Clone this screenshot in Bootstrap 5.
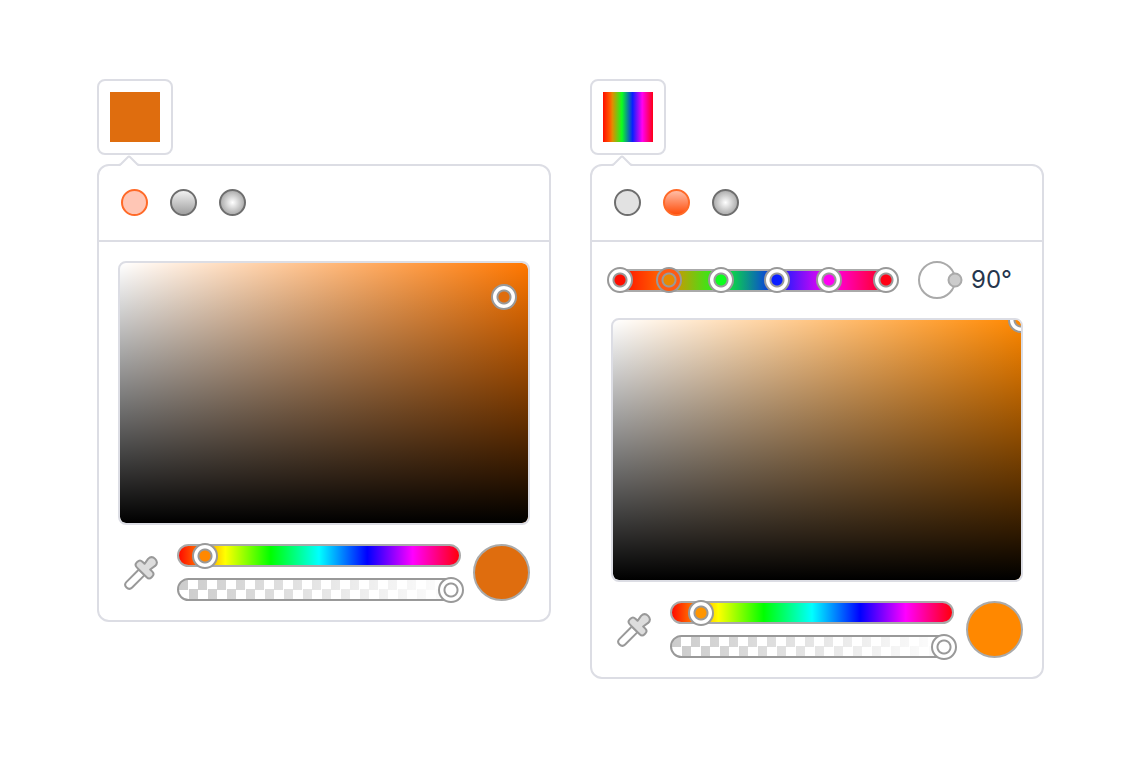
<!DOCTYPE html>
<html lang="en">
<head>
<meta charset="utf-8">
<meta name="viewport" content="width=device-width, initial-scale=1">
<title>Color and gradient picker</title>
<link href="https://cdn.jsdelivr.net/npm/bootstrap@5.3.0/dist/css/bootstrap.min.css" rel="stylesheet">
<style>
  :root {
    --line: #dcdde4;
    --ring: #999;
    --rainbow: linear-gradient(to right, #f00, #ff0 17%, #0f0 33%, #0ff 50%, #00f 67%, #f0f 83%, #f00);
    --blend: linear-gradient(to right, #ff0d00, #ff5c00 14%, #e68a00 18.6%, #0dff1e 37.8%, #0a1eff 59.2%, #ff00f2 78.4%, #ff0015);
  }
  body { background: #fff; font-family: Inter, "Liberation Sans", sans-serif; color: #26364d; }
  main { padding: 79px 100px 40px 97px; gap: 39px; }
  .picker { flex: 1 1 360px; min-width: 0; }

  .trigger { width: 76px; height: 76px; padding: 11px; border: 2px solid var(--line); border-radius: 8px; background: #fff; }
  .trigger span { display: block; height: 100%; background: var(--paint); }

  .panel { margin-top: 9px; border: 2px solid var(--line); border-radius: 12px; }
  .notch { position: absolute; left: 19px; top: -12px; }
  .modes { padding: 23px 22px 24px; gap: 22px; border-bottom: 2px solid var(--line); }
  .mode { appearance: none; display: block; width: 27px; height: 27px; margin: 0; border: 2px solid #6e6e6e; border-radius: 50%; background: #e2e2e2 border-box; }
  .mode-linear { background: linear-gradient(#f8f8f8, #999) border-box; }
  .mode-radial { background: radial-gradient(circle, #fff, #9c9c9c 75%) border-box; }
  .mode:checked { border-color: #ff6a28; }
  .mode-solid:checked { background: #ffc6b5; }
  .mode-linear:checked { background: linear-gradient(#ffbda6, #ff4f0d); }

  .tools { padding: 19px; gap: 19px; }
  .shade { height: 264px; border: 2px solid var(--line); border-radius: 8px;
    background: linear-gradient(to top, #000, transparent) padding-box, linear-gradient(to right, #fff, var(--hue)) padding-box; }

  .knob { position: absolute; width: 26px; height: 26px; padding: 0; border: 2px solid var(--ring); border-radius: 50%; transform: translate(-50%, -50%);
    background: radial-gradient(circle, var(--c) 5px, var(--ring) 6px 7px, var(--rim, #fff) 8px) border-box; }
  .knob.current { --rim: #ff5a12; }

  .blend-row { padding-left: 9px; }
  .blend { height: 23px; border: solid #aaa; border-width: 2px 0; background: var(--blend); }
  .dial { width: 38px; height: 38px; margin-left: 32px; border: 2px solid #aaa; border-radius: 50%; }
  .dial button { position: absolute; left: calc(100% + 1px); top: 50%; width: 15px; height: 15px; padding: 0; border: 2px solid #aaa; border-radius: 50%; background: #ccc; transform: translate(-50%, -50%); }
  .angle { width: 52px; margin-left: 15px; padding: 0; border: 0; background: transparent; color: inherit; font-size: 24px; line-height: 32px; }

  .dropper { width: 48px; padding: 0 0 0 5px; border: 0; background: none; text-align: left; }
  .dropper svg { display: block; }
  .sliders { gap: 11px; min-width: 0; margin: 0 12px 0 11px; }
  .rail { height: 23px; border: 2px solid var(--ring); border-radius: 12px; }
  .rail-hue { background: var(--rainbow) border-box; border-color: #aaa; }
  .rail-alpha { background: linear-gradient(to right, transparent, #fff) padding-box, conic-gradient(#fff 25%, #ccc 0 50%, #fff 0 75%, #ccc 0) 0 0 / 19px 19px padding-box; }
  .slider { appearance: none; flex: 1 0 auto; width: calc(100% + 10px); height: 26px; margin: 0 -5px; background: transparent; }
  .slider::-webkit-slider-thumb { appearance: none; width: 26px; height: 26px; border: 2px solid var(--ring); border-radius: 50%;
    background: radial-gradient(circle, var(--c) 5px, var(--ring) 6px 7px, #fff 8px) border-box; }
  .slider::-moz-range-thumb { box-sizing: border-box; width: 26px; height: 26px; border: 2px solid var(--ring); border-radius: 50%;
    background: radial-gradient(circle, var(--c) 5px, var(--ring) 6px 7px, #fff 8px) border-box; }
  .result { width: 57px; height: 57px; border: 2px solid #aaa; border-radius: 50%; background: var(--c); }
</style>
</head>
<body>
<svg class="d-none" aria-hidden="true">
  <symbol id="notch" viewBox="0 0 22 14">
    <path d="M1 12 H2 L11 2.500 L20 12 H21 V14 H1Z" fill="#fff"/>
    <path d="M0 11 C2 11 2 11 3 10 L10 3 Q11 2 12 3 L19 10 C20 11 20 11 22 11" fill="none" stroke="#dcdde4" stroke-width="2"/>
  </symbol>
  <symbol id="dropper" viewBox="0 0 36 36">
    <g transform="translate(18 18) rotate(45)" stroke="#999" stroke-width="2" stroke-linejoin="round">
      <path d="M-4 -1 V16.500 Q-4 20.500 0 20.500 T4 16.500 V-1Z" fill="#fff"/>
      <path d="M-4 -9 L-5 -15 Q-5 -20 0 -20 T5 -15 L4 -9 H7 Q10.500 -9 10.500 -5.500 V-4.500 Q10.500 -1 7 -1 H-7 Q-10.500 -1 -10.500 -4.500 V-5.500 Q-10.500 -9 -7 -9Z" fill="#ddd"/>
    </g>
  </symbol>
</svg>

<main class="d-flex flex-wrap align-items-start">
  <section class="picker" aria-label="Solid color">
    <button class="trigger d-block" type="button" aria-label="Open color" style="--paint:#df6d0e"><span></span></button>
    <div class="panel position-relative">
      <svg class="notch" width="22" height="14" aria-hidden="true"><use href="#notch"/></svg>
      <div class="modes d-flex" role="radiogroup" aria-label="Fill type">
        <input class="mode mode-solid" type="radio" name="fill-a" aria-label="Solid" checked>
        <input class="mode mode-linear" type="radio" name="fill-a" aria-label="Linear gradient">
        <input class="mode mode-radial" type="radio" name="fill-a" aria-label="Radial gradient">
      </div>
      <div class="tools d-flex flex-column">
        <div class="shade position-relative overflow-hidden" style="--hue:#ff7700">
          <button class="knob" type="button" aria-label="Shade" style="--c:#df6d0e; left:94%; top:13%"></button>
        </div>
        <div class="d-flex align-items-center">
          <button class="dropper flex-shrink-0" type="button" aria-label="Pick from screen"><svg width="36" height="36"><use href="#dropper"/></svg></button>
          <div class="sliders d-flex flex-column flex-grow-1">
            <div class="rail rail-hue d-flex align-items-center"><input class="slider" type="range" aria-label="Hue" min="0" max="360" value="24" style="--c:#ff8800"></div>
            <div class="rail rail-alpha d-flex align-items-center"><input class="slider" type="range" aria-label="Opacity" min="0" max="100" value="100" style="--c:#fff"></div>
          </div>
          <div class="result flex-shrink-0" style="--c:#df6d0e"></div>
        </div>
      </div>
    </div>
  </section>

  <section class="picker" aria-label="Gradient">
    <button class="trigger d-block" type="button" aria-label="Open gradient" style="--paint:var(--blend)"><span></span></button>
    <div class="panel position-relative">
      <svg class="notch" width="22" height="14" aria-hidden="true"><use href="#notch"/></svg>
      <div class="modes d-flex" role="radiogroup" aria-label="Fill type">
        <input class="mode mode-solid" type="radio" name="fill-b" aria-label="Solid">
        <input class="mode mode-linear" type="radio" name="fill-b" aria-label="Linear gradient" checked>
        <input class="mode mode-radial" type="radio" name="fill-b" aria-label="Radial gradient">
      </div>
      <div class="tools d-flex flex-column">
        <div class="blend-row d-flex align-items-center">
          <div class="blend flex-grow-1 position-relative">
            <button class="knob top-50" type="button" aria-label="Stop 1" style="--c:#ff0d00; left:0%"></button>
            <button class="knob current top-50" type="button" aria-label="Stop 2" style="--c:#e68a00; left:18.6%"></button>
            <button class="knob top-50" type="button" aria-label="Stop 3" style="--c:#0dff1e; left:37.8%"></button>
            <button class="knob top-50" type="button" aria-label="Stop 4" style="--c:#0a1eff; left:59.2%"></button>
            <button class="knob top-50" type="button" aria-label="Stop 5" style="--c:#ff00f2; left:78.4%"></button>
            <button class="knob top-50" type="button" aria-label="Stop 6" style="--c:#ff0015; left:100%"></button>
          </div>
          <div class="dial position-relative flex-shrink-0"><button type="button" aria-label="Rotate"></button></div>
          <input class="angle flex-shrink-0" type="text" aria-label="Angle" value="90°">
        </div>
        <div class="shade position-relative overflow-hidden" style="--hue:#ff8800">
          <button class="knob" type="button" aria-label="Shade" style="--c:#ff8800; left:100%; top:0%"></button>
        </div>
        <div class="d-flex align-items-center">
          <button class="dropper flex-shrink-0" type="button" aria-label="Pick from screen"><svg width="36" height="36"><use href="#dropper"/></svg></button>
          <div class="sliders d-flex flex-column flex-grow-1">
            <div class="rail rail-hue d-flex align-items-center"><input class="slider" type="range" aria-label="Hue" min="0" max="360" value="29" style="--c:#ff9500"></div>
            <div class="rail rail-alpha d-flex align-items-center"><input class="slider" type="range" aria-label="Opacity" min="0" max="100" value="100" style="--c:#fff"></div>
          </div>
          <div class="result flex-shrink-0" style="--c:#ff8800"></div>
        </div>
      </div>
    </div>
  </section>
</main>
<script src="https://cdn.jsdelivr.net/npm/bootstrap@5.3.0/dist/js/bootstrap.bundle.min.js"></script>
</body>
</html>
